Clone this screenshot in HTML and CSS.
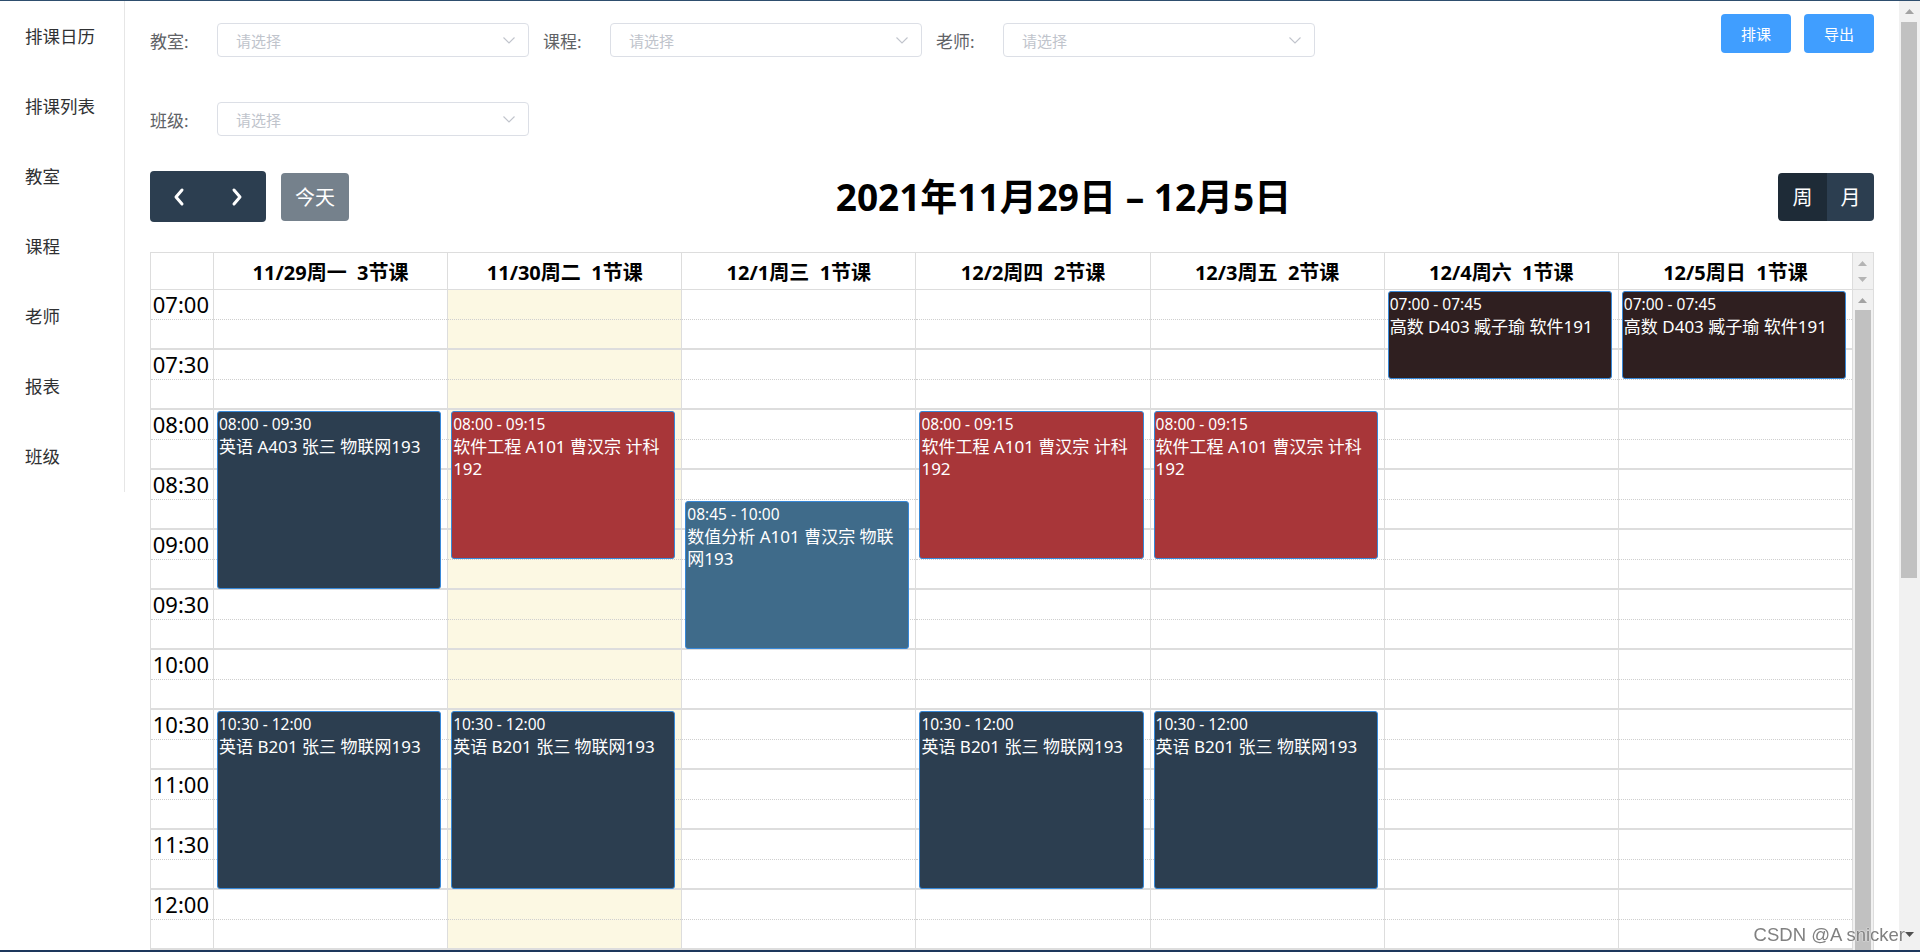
FILE: index.html
```html
<!DOCTYPE html>
<html lang="zh-CN">
<head>
<meta charset="utf-8">
<title>排课日历</title>
<link rel="stylesheet" href="styles.css">
</head>
<body>
<div class="window">
  <aside class="sidebar">
    <ul class="menu">
      <li class="menu-item">排课日历</li>
      <li class="menu-item">排课列表</li>
      <li class="menu-item">教室</li>
      <li class="menu-item">课程</li>
      <li class="menu-item">老师</li>
      <li class="menu-item">报表</li>
      <li class="menu-item">班级</li>
    </ul>
  </aside>

  <main class="main">
    <div class="topbar">
      <div class="filters">
        <div class="filter">
          <span class="filter-label">教室:</span>
          <div class="select"><span class="placeholder">请选择</span><svg class="sel-arrow" width="12" height="7" viewBox="0 0 12 7"><polyline points="0.5,0.5 6,6 11.5,0.5" fill="none" stroke="#c0c4cc" stroke-width="1.1"/></svg></div>
        </div>
        <div class="filter">
          <span class="filter-label">课程:</span>
          <div class="select"><span class="placeholder">请选择</span><svg class="sel-arrow" width="12" height="7" viewBox="0 0 12 7"><polyline points="0.5,0.5 6,6 11.5,0.5" fill="none" stroke="#c0c4cc" stroke-width="1.1"/></svg></div>
        </div>
        <div class="filter">
          <span class="filter-label">老师:</span>
          <div class="select"><span class="placeholder">请选择</span><svg class="sel-arrow" width="12" height="7" viewBox="0 0 12 7"><polyline points="0.5,0.5 6,6 11.5,0.5" fill="none" stroke="#c0c4cc" stroke-width="1.1"/></svg></div>
        </div>
        <div class="filter">
          <span class="filter-label">班级:</span>
          <div class="select"><span class="placeholder">请选择</span><svg class="sel-arrow" width="12" height="7" viewBox="0 0 12 7"><polyline points="0.5,0.5 6,6 11.5,0.5" fill="none" stroke="#c0c4cc" stroke-width="1.1"/></svg></div>
        </div>
      </div>
      <div class="actions">
        <button class="btn-primary">排课</button>
        <button class="btn-primary">导出</button>
      </div>
    </div>

    <div class="fc-toolbar">
      <div class="tb-left">
        <div class="nav-group">
          <div class="nav-btn"><svg width="14" height="20" viewBox="0 0 14 20"><polyline points="10,3 4,10 10,17" fill="none" stroke="#fff" stroke-width="3" stroke-linecap="round" stroke-linejoin="round"/></svg></div>
          <div class="nav-btn"><svg width="14" height="20" viewBox="0 0 14 20"><polyline points="4,3 10,10 4,17" fill="none" stroke="#fff" stroke-width="3" stroke-linecap="round" stroke-linejoin="round"/></svg></div>
        </div>
        <div class="today-btn">今天</div>
      </div>
      <h2 class="fc-title">2021年11月29日 – 12月5日</h2>
      <div class="view-group">
        <div class="view-btn active">周</div>
        <div class="view-btn">月</div>
      </div>
    </div>

    <div class="cal">
      <div class="cal-head">
        <div class="head-axis"></div>
        <div class="head-cell">11/29周一  3节课</div>
        <div class="head-cell">11/30周二  1节课</div>
        <div class="head-cell">12/1周三  1节课</div>
        <div class="head-cell">12/2周四  2节课</div>
        <div class="head-cell">12/3周五  2节课</div>
        <div class="head-cell">12/4周六  1节课</div>
        <div class="head-cell">12/5周日  1节课</div>
        <div class="head-gutter">
          <svg width="9" height="5" viewBox="0 0 9 5"><polygon points="0,5 4.5,0 9,5" fill="#b4b4b4"/></svg>
          <svg width="9" height="5" viewBox="0 0 9 5"><polygon points="0,0 4.5,5 9,0" fill="#b4b4b4"/></svg>
        </div>
      </div>

      <div class="cal-body">
        <div class="axis">
          <div class="slot"><span>07:00</span></div><div class="slot"></div>
          <div class="slot"><span>07:30</span></div><div class="slot"></div>
          <div class="slot"><span>08:00</span></div><div class="slot"></div>
          <div class="slot"><span>08:30</span></div><div class="slot"></div>
          <div class="slot"><span>09:00</span></div><div class="slot"></div>
          <div class="slot"><span>09:30</span></div><div class="slot"></div>
          <div class="slot"><span>10:00</span></div><div class="slot"></div>
          <div class="slot"><span>10:30</span></div><div class="slot"></div>
          <div class="slot"><span>11:00</span></div><div class="slot"></div>
          <div class="slot"><span>11:30</span></div><div class="slot"></div>
          <div class="slot"><span>12:00</span></div><div class="slot"></div>
          <div class="slot"></div><div class="slot"></div>
        </div>

        <div class="day">
          <div class="slots"><div class="slot"></div><div class="slot"></div><div class="slot"></div><div class="slot"></div><div class="slot"></div><div class="slot"></div><div class="slot"></div><div class="slot"></div><div class="slot"></div><div class="slot"></div><div class="slot"></div><div class="slot"></div><div class="slot"></div><div class="slot"></div><div class="slot"></div><div class="slot"></div><div class="slot"></div><div class="slot"></div><div class="slot"></div><div class="slot"></div><div class="slot"></div><div class="slot"></div><div class="slot"></div><div class="slot"></div></div>
          <div class="event ev-navy" style="top:121px;height:178px"><div class="ev-time">08:00 - 09:30</div><div class="ev-title">英语 A403 张三 物联网193</div></div>
          <div class="event ev-navy" style="top:421px;height:178px"><div class="ev-time">10:30 - 12:00</div><div class="ev-title">英语 B201 张三 物联网193</div></div>
        </div>

        <div class="day today">
          <div class="slots"><div class="slot"></div><div class="slot"></div><div class="slot"></div><div class="slot"></div><div class="slot"></div><div class="slot"></div><div class="slot"></div><div class="slot"></div><div class="slot"></div><div class="slot"></div><div class="slot"></div><div class="slot"></div><div class="slot"></div><div class="slot"></div><div class="slot"></div><div class="slot"></div><div class="slot"></div><div class="slot"></div><div class="slot"></div><div class="slot"></div><div class="slot"></div><div class="slot"></div><div class="slot"></div><div class="slot"></div></div>
          <div class="event ev-red" style="top:121px;height:148px"><div class="ev-time">08:00 - 09:15</div><div class="ev-title">软件工程 A101 曹汉宗 计科192</div></div>
          <div class="event ev-navy" style="top:421px;height:178px"><div class="ev-time">10:30 - 12:00</div><div class="ev-title">英语 B201 张三 物联网193</div></div>
        </div>

        <div class="day">
          <div class="slots"><div class="slot"></div><div class="slot"></div><div class="slot"></div><div class="slot"></div><div class="slot"></div><div class="slot"></div><div class="slot"></div><div class="slot"></div><div class="slot"></div><div class="slot"></div><div class="slot"></div><div class="slot"></div><div class="slot"></div><div class="slot"></div><div class="slot"></div><div class="slot"></div><div class="slot"></div><div class="slot"></div><div class="slot"></div><div class="slot"></div><div class="slot"></div><div class="slot"></div><div class="slot"></div><div class="slot"></div></div>
          <div class="event ev-steel" style="top:211px;height:148px"><div class="ev-time">08:45 - 10:00</div><div class="ev-title">数值分析 A101 曹汉宗 物联网193</div></div>
        </div>

        <div class="day">
          <div class="slots"><div class="slot"></div><div class="slot"></div><div class="slot"></div><div class="slot"></div><div class="slot"></div><div class="slot"></div><div class="slot"></div><div class="slot"></div><div class="slot"></div><div class="slot"></div><div class="slot"></div><div class="slot"></div><div class="slot"></div><div class="slot"></div><div class="slot"></div><div class="slot"></div><div class="slot"></div><div class="slot"></div><div class="slot"></div><div class="slot"></div><div class="slot"></div><div class="slot"></div><div class="slot"></div><div class="slot"></div></div>
          <div class="event ev-red" style="top:121px;height:148px"><div class="ev-time">08:00 - 09:15</div><div class="ev-title">软件工程 A101 曹汉宗 计科192</div></div>
          <div class="event ev-navy" style="top:421px;height:178px"><div class="ev-time">10:30 - 12:00</div><div class="ev-title">英语 B201 张三 物联网193</div></div>
        </div>

        <div class="day">
          <div class="slots"><div class="slot"></div><div class="slot"></div><div class="slot"></div><div class="slot"></div><div class="slot"></div><div class="slot"></div><div class="slot"></div><div class="slot"></div><div class="slot"></div><div class="slot"></div><div class="slot"></div><div class="slot"></div><div class="slot"></div><div class="slot"></div><div class="slot"></div><div class="slot"></div><div class="slot"></div><div class="slot"></div><div class="slot"></div><div class="slot"></div><div class="slot"></div><div class="slot"></div><div class="slot"></div><div class="slot"></div></div>
          <div class="event ev-red" style="top:121px;height:148px"><div class="ev-time">08:00 - 09:15</div><div class="ev-title">软件工程 A101 曹汉宗 计科192</div></div>
          <div class="event ev-navy" style="top:421px;height:178px"><div class="ev-time">10:30 - 12:00</div><div class="ev-title">英语 B201 张三 物联网193</div></div>
        </div>

        <div class="day">
          <div class="slots"><div class="slot"></div><div class="slot"></div><div class="slot"></div><div class="slot"></div><div class="slot"></div><div class="slot"></div><div class="slot"></div><div class="slot"></div><div class="slot"></div><div class="slot"></div><div class="slot"></div><div class="slot"></div><div class="slot"></div><div class="slot"></div><div class="slot"></div><div class="slot"></div><div class="slot"></div><div class="slot"></div><div class="slot"></div><div class="slot"></div><div class="slot"></div><div class="slot"></div><div class="slot"></div><div class="slot"></div></div>
          <div class="event ev-brown" style="top:1px;height:88px"><div class="ev-time">07:00 - 07:45</div><div class="ev-title">高数 D403 臧子瑜 软件191</div></div>
        </div>

        <div class="day">
          <div class="slots"><div class="slot"></div><div class="slot"></div><div class="slot"></div><div class="slot"></div><div class="slot"></div><div class="slot"></div><div class="slot"></div><div class="slot"></div><div class="slot"></div><div class="slot"></div><div class="slot"></div><div class="slot"></div><div class="slot"></div><div class="slot"></div><div class="slot"></div><div class="slot"></div><div class="slot"></div><div class="slot"></div><div class="slot"></div><div class="slot"></div><div class="slot"></div><div class="slot"></div><div class="slot"></div><div class="slot"></div></div>
          <div class="event ev-brown" style="top:1px;height:88px"><div class="ev-time">07:00 - 07:45</div><div class="ev-title">高数 D403 臧子瑜 软件191</div></div>
        </div>

        <div class="body-gutter">
          <div class="gutter-arrow"><svg width="9" height="5" viewBox="0 0 9 5"><polygon points="0,5 4.5,0 9,5" fill="#a3a3a3"/></svg></div>
          <div class="gutter-thumb"></div>
        </div>
      </div>
    </div>
  </main>

  <div class="page-scroll">
    <div class="ps-arrow"><svg width="9" height="5" viewBox="0 0 9 5"><polygon points="0,5 4.5,0 9,5" fill="#a3a3a3"/></svg></div>
    <div class="ps-thumb"></div>
    <div class="ps-spacer"></div>
    <div class="ps-arrow ps-down"><svg width="9" height="5" viewBox="0 0 9 5"><polygon points="0,0 4.5,5 9,0" fill="#505050"/></svg></div>
  </div>
</div>
<div class="watermark">CSDN @A snicker</div>
<div class="frame-bottom"></div>
</body>
</html>
```

FILE: styles.css
```css
* { box-sizing: border-box; }
html, body { margin: 0; padding: 0; }
body {
  font-family: "Noto Sans", "Noto Sans CJK SC", sans-serif;
  color: #000;
  background: #fff;
  overflow: hidden;
}

.window {
  height: 952px;
  border-top: 1px solid #2e4e6e;
  display: flex;
  overflow: hidden;
}

/* sidebar */
.sidebar {
  width: 125px;
  flex: none;
  height: 491px;
  border-right: 1px solid #e6e6e6;
}
.menu { list-style: none; margin: 0; padding: 0; }
.menu-item {
  height: 70px;
  line-height: 70px;
  padding-left: 25px;
  font-size: 17.5px;
  color: #303133;
}

/* main */
.main {
  flex: 1;
  min-width: 0;
  padding: 0 25px;
}

.topbar {
  display: flex;
  align-items: flex-start;
  padding-top: 13px;
}
.filters {
  display: flex;
  flex-wrap: wrap;
  row-gap: 45px;
  width: 1200px;
  margin-top: 9px;
}
.filter {
  display: flex;
  align-items: center;
  margin-right: 14px;
}
.filter-label {
  width: 67px;
  font-size: 17px;
  color: #606266;
}
.select {
  width: 312px;
  height: 34px;
  border: 1px solid #dcdfe6;
  border-radius: 4px;
  display: flex;
  align-items: center;
  justify-content: space-between;
  padding: 0 13px 0 18px;
}
.placeholder { font-size: 15px; color: #c0c4cc; }
.sel-arrow { display: block; }

.actions {
  margin-left: auto;
  display: flex;
  gap: 13px;
}
.btn-primary {
  width: 70px;
  height: 39px;
  background: #409eff;
  color: #fff;
  border: none;
  border-radius: 4px;
  font-size: 15px;
  font-family: inherit;
  padding: 0;
}

/* calendar toolbar */
.fc-toolbar {
  display: flex;
  justify-content: space-between;
  align-items: center;
  margin-top: 35px;
  height: 51px;
}
.tb-left { display: flex; align-items: center; }
.nav-group {
  display: flex;
  border-radius: 4px;
  overflow: hidden;
}
.nav-btn {
  width: 58px;
  height: 51px;
  background: #2c3e50;
  display: flex;
  align-items: center;
  justify-content: center;
}
.nav-btn svg { display: block; }
.today-btn {
  margin-left: 15px;
  width: 68px;
  height: 48px;
  background: #2c3e50;
  opacity: .65;
  color: #fff;
  font-size: 20px;
  border-radius: 4px;
  display: flex;
  align-items: center;
  justify-content: center;
}
.fc-title {
  margin: 0;
  font-size: 37px;
  font-weight: 700;
  line-height: 44px;
}
.view-group {
  display: flex;
  border-radius: 4px;
  overflow: hidden;
}
.view-btn {
  width: 47px;
  height: 48px;
  background: #2c3e50;
  color: #fff;
  font-size: 20px;
  display: flex;
  align-items: center;
  justify-content: center;
}
.view-btn.active { width: 49px; background: #1e2b37; }

/* calendar */
.cal {
  margin-top: 30px;
  border: 1px solid #ddd;
  border-bottom: none;
}
.cal-head {
  display: grid;
  grid-template-columns: 62px repeat(7, 1fr) 21px;
  height: 37px;
  border-bottom: 1px solid #ddd;
}
.head-cell {
  border-left: 1px solid #ddd;
  display: flex;
  align-items: center;
  justify-content: center;
  font-weight: 700;
  font-size: 20px;
  white-space: pre;
}
.head-gutter {
  border-left: 1px solid #ddd;
  background: #f1f1f1;
  display: flex;
  flex-direction: column;
  align-items: center;
  justify-content: center;
  gap: 11px;
}
.head-gutter svg { display: block; }

.cal-body {
  display: grid;
  grid-template-columns: 62px repeat(7, 1fr) 21px;
}
.slot {
  height: 30px;
  border-bottom: 1px dotted #cfcfcf;
}
.slot:nth-child(even) { border-bottom: 2px solid #ddd; }

.axis .slot span {
  display: block;
  text-align: right;
  padding-right: 4px;
  font-size: 22px;
  line-height: 29px;
  color: #000;
}

.day {
  position: relative;
  border-left: 1px solid #ddd;
}
.day.today { background: #fcf8e3; }

.event {
  position: absolute;
  left: 3px;
  right: 6px;
  border: 1px solid #3788d8;
  border-radius: 3px;
  color: #fff;
  padding: 2px 1px;
  overflow: hidden;
}
.ev-time { font-size: 15.5px; line-height: 20px; }
.ev-title { font-size: 17px; line-height: 22px; margin-top: 2px; }
.ev-navy { background: #2c3e50; }
.ev-red { background: #a83639; }
.ev-steel { background: #3f6b8a; }
.ev-brown { background: #2f1f20; }

.body-gutter {
  border-left: 1px solid #ddd;
  background: #f1f1f1;
  display: flex;
  flex-direction: column;
  align-items: center;
}
.gutter-arrow {
  height: 20px;
  display: flex;
  align-items: center;
  justify-content: center;
}
.gutter-arrow svg { display: block; }
.gutter-thumb {
  width: 16px;
  flex: 1;
  background: #c1c1c1;
}

/* page scrollbar */
.page-scroll {
  width: 21px;
  flex: none;
  background: #f1f1f1;
  display: flex;
  flex-direction: column;
  align-items: center;
}
.ps-arrow {
  height: 21px;
  width: 100%;
  display: flex;
  align-items: center;
  justify-content: center;
}
.ps-arrow svg { display: block; }
.ps-thumb {
  width: 16px;
  height: 556px;
  margin-left: -1px;
  background: #c1c1c1;
}
.ps-spacer { flex: 1; }
.ps-down { height: 26px; align-items: flex-start; padding-top: 6px; }

/* overlays */
.watermark {
  position: fixed;
  top: 925px;
  right: 15px;
  font-family: "Liberation Sans", Arial, sans-serif;
  font-size: 18.5px;
  line-height: 20px;
  color: #808080;
  text-shadow: 0 0 2px #fff, 0 0 1px #fff;
}
.frame-bottom {
  position: fixed;
  left: 0;
  right: 0;
  bottom: 0;
  height: 2px;
  background: #1d375c;
}
```
